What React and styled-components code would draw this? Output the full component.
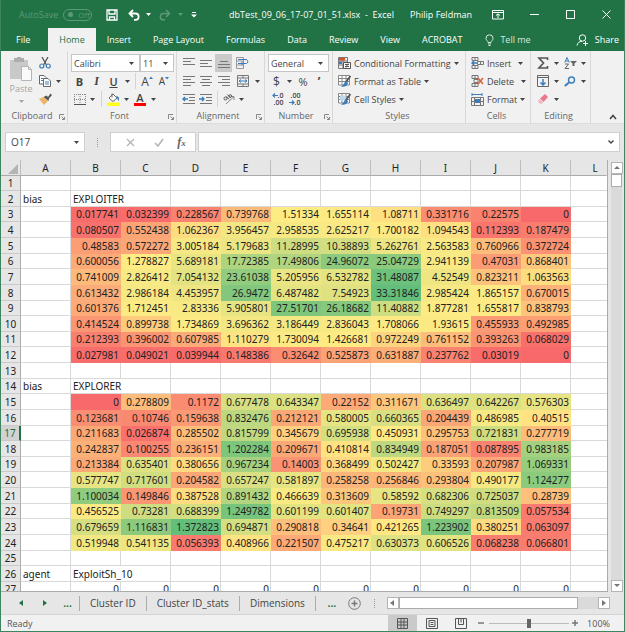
import React, { useState } from "react";
import styled, { createGlobalStyle, css } from "styled-components";

const GREEN = "#217346";
const FADED = "#5a9a78";
const UI = `"Open Sans", "Noto Sans", sans-serif`;

const GlobalStyle = createGlobalStyle`
  *, *::before, *::after { box-sizing: border-box; }
  body { margin: 0; font-family: ${UI}; font-size: 9px; color: #444; }
  button, input, select { font: inherit; color: inherit; margin: 0; padding: 0; border: 0; background: none; border-radius: 0; }
  svg { display: block; flex: none; }
`;

const Window = styled.div`
  display: flex;
  flex-direction: column;
  height: 100vh;
  border: 1px solid #3d8560;
  border-top-color: ${GREEN};
  background: #e6e6e6;
`;

/* ---------- title bar ---------- */

const TitleBar = styled.header`
  display: flex;
  align-items: center;
  height: 27px;
  flex: none;
  padding: 0 0 0 18px;
  background: ${GREEN};
  color: #fff;
`;

const AutoSave = styled.label`
  display: flex;
  align-items: center;
  gap: 5px;
  color: ${FADED};
  width: 82px;
  white-space: nowrap;
`;

const Toggle = styled.button`
  display: flex;
  align-items: center;
  gap: 5px;
  width: 29px;
  height: 12px;
  padding: 0 4px;
  border: 1px solid ${FADED};
  border-radius: 6px;
  font-size: 8px;
  &::before {
    content: "";
    width: 5px;
    height: 5px;
    border-radius: 50%;
    background: ${FADED};
    flex: none;
  }
`;

const BarButton = styled.button`
  display: flex;
  align-items: center;
  justify-content: center;
  flex: none;
  width: ${(p) => p.$w}px;
  height: 24px;
  color: ${(p) => (p.$faded ? FADED : "#fff")};
`;

const DocTitle = styled.h1`
  flex: 1;
  margin: 0;
  padding-left: 8px;
  font-size: 9px;
  font-weight: 400;
  text-align: center;
  white-space: pre;
`;

const UserName = styled.span`
  white-space: nowrap;
  margin-right: 8px;
`;

/* ---------- tabs ---------- */

const TabBar = styled.nav`
  display: flex;
  align-items: stretch;
  height: 23px;
  flex: none;
  padding: 0 4px;
  background: ${GREEN};
  color: #fff;
`;

const Tab = styled.button`
  display: flex;
  align-items: center;
  gap: 6px;
  padding: 0 ${(p) => p.$pad || 11}px;
  white-space: nowrap;
  &:first-child { margin-right: 7px; }
  ${(p) => p.$active && css`
    background: #f1f1f1;
    color: ${GREEN};
  `}
`;

const TellMe = styled(Tab)`
  color: #d6e8dd;
`;

const Share = styled(Tab)`
  margin-left: auto;
`;

/* ---------- ribbon ---------- */

const Ribbon = styled.section`
  display: flex;
  flex: none;
  height: 73px;
  background: #f1f1f1;
  border-bottom: 1px solid #dcdcdc;
`;

const Group = styled.div`
  display: flex;
  flex-direction: column;
  flex: none;
  width: ${(p) => p.$w}px;
  padding: 3px 0 0 ${(p) => p.$pad || 4}px;
  border-right: 1px solid #d8d8d8;
`;

const GroupBody = styled.div`
  display: flex;
  height: 54px;
`;

const Rows = styled.div`
  display: flex;
  flex-direction: column;
`;

const Row = styled.div`
  display: flex;
  align-items: center;
  height: 18px;
`;

const Caption = styled.div`
  display: flex;
  align-items: center;
  justify-content: center;
  height: 15px;
  position: relative;
  color: #666;
  padding-right: 8px;
`;

const Launcher = styled.button`
  position: absolute;
  right: 2px;
  top: 6px;
  color: #888;
`;

const Tool = styled.button`
  display: flex;
  align-items: center;
  justify-content: center;
  flex: none;
  width: ${(p) => p.$w}px;
  height: 18px;
  background: ${(p) => (p.$on ? "#cacaca" : "none")};
`;

const LetterTool = styled(Tool)`
  font-size: ${(p) => p.$size || 11}px;
  font-weight: ${(p) => p.$weight || 400};
  font-style: ${(p) => (p.$italic ? "italic" : "normal")};
  font-family: ${(p) => (p.$italic ? `"Liberation Serif", serif` : UI)};
  text-decoration: ${(p) => (p.$underline ? "underline" : "none")};
`;

const TextTool = styled.button`
  display: flex;
  align-items: center;
  gap: 3px;
  height: 18px;
  white-space: nowrap;
`;

const PasteButton = styled.button`
  display: flex;
  flex-direction: column;
  align-items: center;
  width: 32px;
  padding-top: 3px;
  margin-right: 1px;
  color: #a5a5a5;
  svg + span { margin: 2px 0 5px; line-height: 12px; }
`;

const Rule = styled.i`
  width: 1px;
  height: 16px;
  margin: 0 ${(p) => p.$gap || 4}px;
  background: #d4d4d4;
`;

const SelectBox = styled.label`
  display: flex;
  align-items: center;
  width: ${(p) => p.$w}px;
  height: 18px;
  padding: 0 5px 0 2px;
  border: 1px solid #c6c6c6;
  background: #fff;
  select {
    flex: 1;
    min-width: 0;
    appearance: none;
    outline: 0;
  }
`;

const Collapse = styled.button`
  align-self: flex-end;
  margin: 0 7px 3px auto;
`;

/* ---------- formula bar ---------- */

const FormulaBar = styled.section`
  display: flex;
  align-items: center;
  height: 36px;
  flex: none;
  padding: 0 4px;
`;

const Field = styled.div`
  display: flex;
  align-items: center;
  height: 20px;
  border: 1px solid #cfcfcf;
  background: #fff;
  padding: 0 5px;
  width: ${(p) => (p.$w ? `${p.$w}px` : "auto")};
  flex: ${(p) => (p.$w ? "none" : 1)};
  margin-right: ${(p) => p.$gap || 0}px;
  justify-content: ${(p) => (p.$spread ? "space-around" : "flex-start")};
  input { flex: 1; min-width: 0; outline: 0; font-size: 10px; }
`;

const Fx = styled.button`
  font: italic 700 12px "Liberation Serif", serif;
  color: #666;
  small { font-size: 9px; }
`;

const DotsHandle = styled.i`
  width: 1px;
  height: 9px;
  margin: 0 12px;
  border-left: 1px dotted #999;
`;

/* ---------- sheet ---------- */

const SheetArea = styled.main`
  display: flex;
  flex: 1;
  min-height: 0;
`;

const SheetClip = styled.div`
  flex: 1;
  min-width: 0;
  overflow: hidden;
  border-right: 1px solid #ababab;
  border-bottom: 1px solid #ababab;
`;

const Sheet = styled.table`
  width: 100%;
  table-layout: fixed;
  border-collapse: separate;
  border-spacing: 0;
  background: #fff;
  font-family: "Noto Sans", "Open Sans", sans-serif;
  font-size: 10px;
  line-height: 14px;
  color: #222;
  tbody tr { height: 16px; }
  tbody tr:nth-child(8n + 1), tbody tr:nth-child(8n + 3), tbody tr:nth-child(8n + 6) { height: 15px; }
`;

const Col = styled.col`
  width: ${(p) => (p.$w ? `${p.$w}px` : "auto")};
`;

const ColHead = styled.th`
  height: 16px;
  padding: 0;
  font-weight: 400;
  background: #e6e6e6;
  border-right: 1px solid #bdbdbd;
  border-bottom: 1px solid #ababab;
  &:last-child { border-right-color: #e6e6e6; padding-left: 13px; }
`;

const Corner = styled(ColHead)`
  svg { margin: 0 0 0 auto; }
  padding: 2px 2px 0 0;
`;

const RowHead = styled.th`
  padding: 0;
  font-weight: 400;
  background: ${(p) => (p.$active ? "#d2d2d2" : "#e6e6e6")};
  color: ${(p) => (p.$active ? GREEN : "#222")};
  border-right: ${(p) => (p.$active ? `2px solid ${GREEN}` : "1px solid #ababab")};
  border-bottom: 1px solid #cacaca;
`;

const Cell = styled.td`
  padding: 0 1px 0 2px;
  white-space: nowrap;
  overflow: hidden;
  border-right: 1px solid #d9d9d9;
  border-bottom: 1px solid #d9d9d9;
  text-align: ${(p) => (p.$num ? "right" : "left")};
  &:last-child { border-right: 0; }
`;

const HeatCell = styled(Cell)`
  border-color: transparent;
  background-clip: border-box;
  text-align: right;
`;

const VScroll = styled.div`
  display: flex;
  flex-direction: column;
  width: 16px;
  flex: none;
  padding: 2px 2px 0 3px;
`;

const Track = styled.div`
  flex: 1;
  display: flex;
  flex-direction: ${(p) => (p.$vertical ? "column" : "row")};
  background: #dadada;
`;

const ScrollButton = styled.button`
  display: flex;
  align-items: center;
  justify-content: center;
  flex: none;
  width: 12px;
  height: 12px;
  background: #fff;
  border: 1px solid #b4b4b4;
  color: #777;
`;

const Thumb = styled.div`
  background: #fff;
  border: 1px solid #ababab;
  ${(p) => (p.$vertical ? "height: 13px;" : "width: 90%;")}
`;

/* ---------- bottom ---------- */

const SheetTabs = styled.footer`
  display: flex;
  align-items: center;
  flex: none;
  height: 22px;
  padding: 0 14px 0 9px;
`;

const NavButton = styled.button`
  display: flex;
  justify-content: center;
  align-items: center;
  width: ${(p) => p.$w || 23}px;
  height: 20px;
  flex: none;
  color: ${(p) => (p.$grey ? "#777" : GREEN)};
  font-weight: 700;
  font-size: 10px;
`;

const SheetTab = styled.button`
  height: 15px;
  font-size: 10px;
  line-height: 13px;
  padding: 0 10px;
  white-space: nowrap;
  border-right: 1px solid #ababab;
  &:first-of-type { border-left: 1px solid #ababab; }
`;

const TabList = styled.div`
  display: flex;
`;

const HScroll = styled.div`
  display: flex;
  height: 12px;
  flex: 1;
`;

const StatusBar = styled.div`
  display: flex;
  align-items: center;
  flex: none;
  height: 17px;
  padding: 0 14px 0 6px;
  background: #f1f1f1;
  border-top: 1px solid #d4d4d4;
  color: #555;
`;

const Ready = styled.span`
  flex: 1;
`;

const ViewButton = styled.button`
  display: flex;
  align-items: center;
  justify-content: center;
  width: 29px;
  height: 16px;
  background: ${(p) => (p.$on ? "#cacaca" : "none")};
`;

const ZoomSlider = styled.input`
  appearance: none;
  width: 80px;
  height: 10px;
  margin: 0 2px;
  &::-webkit-slider-runnable-track { height: 1px; background: #bcbcbc; }
  &::-webkit-slider-thumb { appearance: none; width: 4px; height: 9px; margin-top: -4px; background: #666; }
`;

const Zoom = styled.output`
  width: 31px;
  text-align: right;
`;

/* ---------- icons ---------- */

const Svg = ({ w = 12, h = 12, children, ...rest }) => (
  <svg width={w} height={h} viewBox={`0 0 ${w} ${h}`} fill="none" stroke="currentColor" aria-hidden="true" {...rest}>
    {children}
  </svg>
);

const Caret = () => (
  <Svg w={5} h={3} stroke="none"><path d="M0 0h5L2.500 3z" fill="currentColor" /></Svg>
);

const SaveIcon = () => (
  <Svg><path d="M1 1h10v10H1zM3 1v4h6V1M3.500 11V8h5v3" strokeWidth="1.3" /></Svg>
);
const UndoIcon = () => (
  <Svg w={13} h={12}><path d="M5 1L1.500 4.500 5 8M2 4.500h5.500a3 3 0 0 1 0 6.300H6" strokeWidth="1.800" /></Svg>
);
const RedoIcon = () => (
  <Svg w={13} h={12}><path d="M8 1l3.500 3.500L8 8M11 4.500H5.500a3 3 0 0 0 0 6.300H7" strokeWidth="1.500" /></Svg>
);
const CustomizeIcon = () => (
  <Svg w={6} h={6} stroke="none" fill="currentColor"><path d="M1 0h4v1H1zM0 2.500h6L3 5.500z" /></Svg>
);
const RibbonIcon = () => (
  <Svg w={12} h={10}><path d="M.5.500h11v8.500H.5zM.5 2.500h11M6 8V4M4 5.500L6 3.800l2 1.700" /></Svg>
);
const BulbIcon = () => (
  <Svg w={9} h={12}><path d="M3 8.500C3 7 1 6.500 1 4.300a3.500 3.500 0 0 1 7 0C8 6.500 6 7 6 8.500zM3 10h3M3.500 11.500h2" /></Svg>
);
const PersonIcon = () => (
  <Svg w={13} h={12}><circle cx="6.500" cy="4" r="3.200" /><path d="M1 11.500C1.500 8.500 3.500 7.500 6 7.300M7 9.500h5M9.500 7v5" /></Svg>
);
const PasteIcon = () => (
  <Svg w={23} h={24} stroke="none">
    <path d="M0 3h18v19H0z" fill="#c9c9c9" /><path d="M4 1h3V0h4v1h3v4H4z" fill="#adadad" />
    <path d="M11.500 9.500h7l3 3v11h-10z" fill="#fafafa" stroke="#b5b5b5" /><path d="M18.500 9.500v3h3" stroke="#b5b5b5" />
  </Svg>
);
const CutIcon = () => (
  <Svg><path d="M3 0l4.500 8M9 0L4.500 8" stroke="#555" strokeWidth="1.300" /><circle cx="2.800" cy="9" r="2" stroke="#3b7dba" strokeWidth="1.200" /><circle cx="9.200" cy="9" r="2" stroke="#3b7dba" strokeWidth="1.200" /></Svg>
);
const CopyIcon = () => (
  <Svg><path d="M.5.500h4.500l2 2v6.500H.5z" fill="#fff" stroke="#666" /><path d="M4.500 3.500h4.500l2.500 2.500v5.500h-7z" fill="#fff" stroke="#666" /><path d="M2 3.500h2M2 5.500h2M6 7h4M6 9h4" stroke="#3b7dba" /></Svg>
);
const BrushIcon = () => (
  <Svg w={13} h={12} stroke="none"><path d="M0 6l4-2 5 4-4 4z" fill="#edb468" /><path d="M4.500 4l3-1.500L9 4l2.500-3.500L13 2l-3 3.500L9.500 8z" fill="#555" /></Svg>
);
const BordersIcon = () => (
  <Svg w={12} h={11}><path d="M.5 0v10M6 0v10M11.500 0v10M0 .5h12M0 5.500h12" strokeDasharray="1 1" stroke="#888" /><path d="M0 10.500h12" stroke="#555" /></Svg>
);
const FillIcon = () => (
  <Svg w={13} h={13}><path d="M2 5l4-4 4 4-4 3.500z" fill="#fff" stroke="#666" /><path d="M5 .5v4" stroke="#666" /><path d="M10 3c2.500 1 2.500 3 1.500 5-1-1.500-1-3-2.500-4z" fill="#3b7dba" stroke="none" /><path d="M0 9.500h13V13H0z" fill="#ffff1e" stroke="none" /></Svg>
);
const ColourBar = styled.span`
  display: flex;
  flex-direction: column;
  align-items: center;
  width: 12px;
  line-height: 10px;
  border-bottom: 3px solid #f00;
`;
const Mark = ({ down }) => (
  <Svg w={5} h={11} stroke="none"><path d={down ? "M0 1h4L2 3.500z" : "M0 3h4L2 .5z"} fill="#3b7dba" /></Svg>
);
const Lines = ({ widths, start = 0, align = "left" }) => (
  <Svg w={12} h={11}>
    {widths.map((w, i) => {
      const x = align === "left" ? 0 : align === "right" ? 12 - w : (12 - w) / 2;
      return <path key={i} d={`M${x} ${start + i * 3 + 0.5}h${w}`} stroke="#777" />;
    })}
  </Svg>
);
const WrapIcon = () => (
  <Svg w={13} h={12}><path d="M.5.500h7v11h-7zM.5 4h7M.5 8h7" stroke="#999" /><path d="M2 2.500h9M2 6.500h8.500a2 2 0 0 0 .5-3.500M7 4.500L5 6.500l2 2" stroke="#3b7dba" /></Svg>
);
const MergeIcon = () => (
  <Svg><path d="M.5.500h11v11H.5zM.5 3h11M.5 9h11M6 .5V3M6 9v2.500" stroke="#777" /><path d="M2 6h8M4 4.500L2 6l2 1.500M8 4.500L10 6 8 7.500" stroke="#3b7dba" /></Svg>
);
const IndentIcon = ({ flip }) => (
  <Svg w={13} h={10}><path d="M1 .5h12M7 3.500h6M7 6.500h6M1 9.500h12" stroke="#777" /><path d={flip ? "M0 5h5M3 3l2 2-2 2" : "M6 5H1M3 3L1 5l2 2"} stroke="#3b7dba" strokeWidth="1.400" /></Svg>
);
const OrientationIcon = () => (
  <Svg w={13} h={12}><path d="M3 11L11 3.500M11 7V3.500H8" stroke="#888" /><circle cx="2.500" cy="5.500" r="1.500" stroke="#555" /><path d="M3.500 3.500l2.500 3M4.500 1.500l3 3.500" stroke="#555" /><circle cx="7.300" cy="3" r="1.300" stroke="#555" /></Svg>
);
const DecimalBox = styled.span`
  display: flex;
  flex-direction: column;
  align-items: flex-end;
  width: 14px;
  font-size: 7px;
  line-height: 7px;
  font-weight: 600;
  span { display: flex; align-items: center; }
`;
const BlueArrow = ({ right }) => (
  <Svg w={6} h={5}><path d={right ? "M0 2.500h5M3 .5l2 2-2 2" : "M6 2.500H1M3 .5l-2 2 2 2"} stroke="#3b7dba" strokeWidth="1.200" /></Svg>
);
const CondIcon = () => (
  <Svg w={13} h={12}><path d="M.5.500h9v11h-9zM.5 4h9M.5 8h9M5 .5v11" stroke="#777" /><path d="M1 1h6v2.500H1z" fill="#d9502f" stroke="none" /><path d="M1 4.500h3V7H1z" fill="#3b7dba" stroke="none" /><path d="M5.500 5.500h7v6h-7z" fill="#fff" stroke="#555" /><path d="M7 7.500h4M7 9.500h4M10 6.500L8 10.500" stroke="#555" /></Svg>
);
const TableStyleIcon = ({ cell }) => (
  <Svg w={13} h={12}><path d="M.5.500h11v9.500H.5zM.5 3.500h11M.5 6.500h11M4 .5V10M8 .5V10" stroke="#888" fill="#fff" />{cell && <path d="M2 2.500h6v5H2z" fill="#bcd6ec" stroke="none" />}<path d="M12.500 1L8 7" stroke="#555" strokeWidth="1.800" /><path d="M8.500 6C6 6.500 6.500 10 3 11.500c3.500.800 6.500-.5 7-3.500z" fill="#3b7dba" stroke="none" /></Svg>
);
const InsertIcon = () => (
  <Svg w={13} h={12}><path d="M1 .5h6v3H1zM4 .5v3M1 8.500h6v3H1zM4 8.500v3M6.500 4.500h6v3h-6zM9.500 4.500v3" stroke="#777" /><path d="M6 6H1M3 4L1 6l2 2" stroke="#3b7dba" strokeWidth="1.500" /></Svg>
);
const DeleteIcon = () => (
  <Svg w={13} h={12}><path d="M1 .5h6v3H1zM4 .5v3M1 8.500h6v3H1zM4 8.500v3M3 4.500h4v3H3z" stroke="#777" /><path d="M7 3l5 6M12 3L7 9" stroke="#d9603b" strokeWidth="1.500" /></Svg>
);
const FormatIcon = () => (
  <Svg w={13} h={13}><path d="M1 1.500h10M1 0v3M11 0v3" stroke="#3b7dba" /><path d="M.5 4.500h12v8H.5zM.5 8.500h12M3.500 4.500v8M9.500 4.500v8" stroke="#777" /><path d="M4 6h5v4H4z" fill="#3b7dba" stroke="none" /></Svg>
);
const SumIcon = () => (
  <Svg><path d="M10.500 3V1H2l4.500 5L2 11h8.500V9" stroke="#555" strokeWidth="1.700" /></Svg>
);
const SortIcon = () => (
  <Svg w={13} h={12}><path d="M.8 5.500L3 .5l2.200 5M1.500 4h3" stroke="#3b7dba" /><path d="M1 7h3.500L1 11.500h4" stroke="#666" /><path d="M6 4h7l-2.500 2.500V9H8.500V6.500z" fill="#666" stroke="none" /></Svg>
);
const FillDownIcon = () => (
  <Svg><path d="M.5.500h11v11H.5zM.5 2.500h11" stroke="#666" /><path d="M6 4v6M3.500 7.500L6 10l2.500-2.500" stroke="#3b7dba" strokeWidth="1.500" /></Svg>
);
const FindIcon = () => (
  <Svg w={12} h={11}><circle cx="7.500" cy="4" r="3" stroke="#3b7dba" strokeWidth="1.400" /><path d="M5 6.500L.8 10" stroke="#3b7dba" strokeWidth="2" /></Svg>
);
const EraserIcon = () => (
  <Svg w={12} h={10} stroke="none"><path d="M8 0l3 3-4.500 5L3 4.500z" fill="#e8788a" /><path d="M2.500 5L6 8.500 4.500 10 2 9 1 7z" fill="#f3b3bd" /></Svg>
);
const LaunchIcon = () => (
  <Svg w={6} h={6}><path d="M.5 5V.5H5M2.500 2.500l3 3M5.500 3v2.500H3" /></Svg>
);
const Tri = ({ dir }) => {
  const d = { left: "M4 0v6L0 3z", right: "M1 0v6l4-3z", up: "M0 4h6L3 1z", down: "M0 1h6L3 4z" }[dir];
  return <Svg w={6} h={6} stroke="none"><path d={d} fill="currentColor" /></Svg>;
};

/* ---------- data ---------- */

const parse = (text) => text.trim().split("\n").map((line) => line.trim().split(/\s+/));

const exploiter = parse(`
0.017741 0.032399 0.228567 0.739768 1.51334 1.655114 1.08711 0.331716 0.22575 0
0.080507 0.552438 1.062367 3.956457 2.958535 2.625217 1.700182 1.094543 0.112393 0.187479
0.48583 0.572272 3.005184 5.179683 11.28995 10.38893 5.262761 2.563583 0.760966 0.372724
0.600056 1.278827 5.689181 17.72385 17.49806 24.96072 25.04729 2.941139 0.47031 0.868401
0.741009 2.826412 7.054132 23.61038 5.205956 6.532782 31.48087 4.52549 0.823211 1.063563
0.613432 2.986184 4.453957 26.9472 6.487482 7.54923 33.31846 2.985424 1.865157 0.670015
0.601376 1.712451 2.83336 5.905801 27.51701 26.18682 11.40882 1.877281 1.655817 0.838793
0.414524 0.899738 1.734869 3.696362 3.186449 2.836043 1.708066 1.93615 0.455933 0.492985
0.212393 0.396002 0.607985 1.110279 1.730094 1.426681 0.972249 0.761152 0.393263 0.068029
0.027981 0.049021 0.039944 0.148386 0.32642 0.525873 0.631887 0.237762 0.03019 0`);

const explorer = parse(`
0 0.278809 0.1172 0.677478 0.643347 0.22152 0.311671 0.636497 0.642267 0.576303
0.123681 0.10746 0.159638 0.832476 0.212121 0.580005 0.660365 0.204439 0.486985 0.40515
0.211683 0.026874 0.285502 0.815799 0.345679 0.695938 0.450931 0.295753 0.721831 0.277719
0.242837 0.100255 0.236151 1.202284 0.209671 0.410814 0.834949 0.187051 0.087895 0.983185
0.213384 0.635401 0.380656 0.967234 0.14003 0.368499 0.502427 0.33593 0.207987 1.069331
0.577747 0.717601 0.204582 0.657247 0.581897 0.258258 0.256846 0.293804 0.490177 1.124277
1.100034 0.149846 0.387528 0.891432 0.466639 0.313609 0.58592 0.682306 0.725037 0.28739
0.456525 0.73281 0.688399 1.249782 0.601199 0.601407 0.19731 0.749297 0.813509 0.057534
0.679659 1.116831 1.372823 0.694871 0.290818 0.34641 0.421265 1.223902 0.380251 0.063097
0.519948 0.541135 0.056393 0.408966 0.221507 0.475217 0.630373 0.606526 0.068238 0.066801`);

/* Three-colour scale: minimum red, median yellow, maximum green. */
const LOW = [248, 105, 107];
const MID = [255, 235, 132];
const HIGH = [99, 190, 123];

const scaleFor = (block) => {
  const sorted = block.flat().map(Number).sort((a, b) => a - b);
  const half = sorted.length / 2;
  const mid = (sorted[half - 1] + sorted[half]) / 2;
  const min = sorted[0];
  const max = sorted[sorted.length - 1];
  return (v) => {
    const [from, to, t] = v < mid ? [LOW, MID, (v - min) / (mid - min)] : [MID, HIGH, (v - mid) / (max - mid)];
    return `rgb(${from.map((c, i) => Math.round(c + (to[i] - c) * t)).join(",")})`;
  };
};

const heatRows = (block) => {
  const colour = scaleFor(block);
  return block.map((values) => ({ heat: values.map((v) => ({ v, bg: colour(Number(v)) })) }));
};

const sheetRows = [
  {},
  { a: "bias", b: "EXPLOITER" },
  ...heatRows(exploiter),
  {},
  { a: "bias", b: "EXPLORER" },
  ...heatRows(explorer),
  {},
  { a: "agent", b: "ExploitSh_10" },
  { plain: Array(10).fill("0") },
];

const columns = "ABCDEFGHIJKL".split("");

const SheetRow = ({ row, n }) => (
  <tr>
    <RowHead scope="row" $active={n === 17}>{n}</RowHead>
    <Cell>{row.a}</Cell>
    {row.heat && row.heat.map((c, i) => <HeatCell key={i} style={{ backgroundColor: c.bg }}>{c.v}</HeatCell>)}
    {row.plain && row.plain.map((v, i) => <Cell key={i} $num>{v}</Cell>)}
    {row.b && <Cell colSpan={2}>{row.b}</Cell>}
    {!row.heat && !row.plain && Array.from({ length: row.b ? 8 : 10 }, (_, i) => <Cell key={i} />)}
    <Cell />
  </tr>
);

const GroupCaption = ({ children, launcher }) => (
  <Caption>
    {children}
    {launcher && <Launcher aria-label={`${children} settings`}><LaunchIcon /></Launcher>}
  </Caption>
);

const CaretTool = ({ w = 12, label }) => <Tool $w={w} aria-label={label}><Caret /></Tool>;

const Picker = ({ w, label, value }) => (
  <SelectBox $w={w}>
    <select aria-label={label} defaultValue={value}><option>{value}</option></select>
    <Caret />
  </SelectBox>
);

const HomeRibbon = () => (
  <Ribbon>
    <Group $w={67}>
      <GroupBody>
        <PasteButton><PasteIcon /><span>Paste</span><Caret /></PasteButton>
        <Rows>
          <Row><Tool $w={14} aria-label="Cut"><CutIcon /></Tool></Row>
          <Row><Tool $w={14} aria-label="Copy"><CopyIcon /></Tool><CaretTool label="Copy options" /></Row>
          <Row><Tool $w={14} aria-label="Format painter"><BrushIcon /></Tool></Row>
        </Rows>
      </GroupBody>
      <GroupCaption launcher>Clipboard</GroupCaption>
    </Group>

    <Group $w={109} $pad={3}>
      <GroupBody>
        <Rows>
          <Row><Picker w={69} label="Font" value="Calibri" /><Picker w={34} label="Font size" value="11" /></Row>
          <Row>
            <LetterTool $w={17} $weight={700} aria-label="Bold">B</LetterTool>
            <LetterTool $w={17} $weight={700} $italic $size={12} aria-label="Italic">I</LetterTool>
            <LetterTool $w={17} $weight={600} $underline aria-label="Underline">U</LetterTool>
            <CaretTool w={10} label="Underline options" />
            <Rule $gap={3} />
            <LetterTool $w={17} $size={12} aria-label="Grow font">A<Mark /></LetterTool>
            <LetterTool $w={17} $size={10} aria-label="Shrink font">A<Mark down /></LetterTool>
          </Row>
          <Row>
            <Tool $w={17} aria-label="Borders"><BordersIcon /></Tool>
            <CaretTool w={9} label="Border options" />
            <Rule $gap={4} />
            <Tool $w={15} aria-label="Fill colour"><FillIcon /></Tool>
            <CaretTool w={11} label="Fill options" />
            <LetterTool $w={16} $weight={600} aria-label="Font colour"><ColourBar>A</ColourBar></LetterTool>
            <CaretTool w={10} label="Font colour options" />
          </Row>
        </Rows>
      </GroupBody>
      <GroupCaption launcher>Font</GroupCaption>
    </Group>

    <Group $w={88} $pad={3}>
      <GroupBody>
        <Rows>
          <Row>
            <Tool $w={17} aria-label="Top align"><Lines widths={[12, 8, 12]} /></Tool>
            <Tool $w={18} aria-label="Middle align"><Lines widths={[12, 8, 12]} start={2} /></Tool>
            <Tool $w={17} $on aria-label="Bottom align"><Lines widths={[8, 12, 12]} start={3} align="center" /></Tool>
            <Tool $w={21} aria-label="Wrap text"><WrapIcon /></Tool>
          </Row>
          <Row>
            <Tool $w={17} aria-label="Align left"><Lines widths={[12, 8, 12, 8]} /></Tool>
            <Tool $w={18} aria-label="Centre"><Lines widths={[12, 8, 12, 8]} align="center" /></Tool>
            <Tool $w={17} aria-label="Align right"><Lines widths={[12, 8, 12, 8]} align="right" /></Tool>
            <Tool $w={21} aria-label="Merge"><MergeIcon /></Tool>
            <CaretTool w={8} label="Merge options" />
          </Row>
          <Row>
            <Tool $w={17} aria-label="Decrease indent"><IndentIcon /></Tool>
            <Tool $w={17} aria-label="Increase indent"><IndentIcon flip /></Tool>
            <Rule $gap={3} />
            <Tool $w={16} aria-label="Orientation"><OrientationIcon /></Tool>
            <CaretTool w={9} label="Orientation options" />
          </Row>
        </Rows>
      </GroupBody>
      <GroupCaption launcher>Alignment</GroupCaption>
    </Group>

    <Group $w={68} $pad={3}>
      <GroupBody>
        <Rows>
          <Row><Picker w={61} label="Number format" value="General" /></Row>
          <Row>
            <LetterTool $w={17} $size={12} aria-label="Currency">$</LetterTool>
            <CaretTool w={9} label="Currency options" />
            <LetterTool $w={18} aria-label="Percent">%</LetterTool>
            <LetterTool $w={14} $size={12} $weight={700} aria-label="Comma style">’</LetterTool>
          </Row>
          <Row>
            <Tool $w={17} aria-label="Increase decimal"><DecimalBox><span><BlueArrow />.0</span><span>.00</span></DecimalBox></Tool>
            <Tool $w={17} aria-label="Decrease decimal"><DecimalBox><span>.00</span><span><BlueArrow right />.0</span></DecimalBox></Tool>
          </Row>
        </Rows>
      </GroupBody>
      <GroupCaption launcher>Number</GroupCaption>
    </Group>

    <Group $w={133} $pad={5}>
      <GroupBody>
        <Rows>
          <TextTool><CondIcon />Conditional Formatting<Caret /></TextTool>
          <TextTool><TableStyleIcon />Format as Table<Caret /></TextTool>
          <TextTool><TableStyleIcon cell />Cell Styles<Caret /></TextTool>
        </Rows>
      </GroupBody>
      <GroupCaption>Styles</GroupCaption>
    </Group>

    <Group $w={65} $pad={5}>
      <GroupBody>
        <Rows>
          <Row><TextTool><InsertIcon />Insert</TextTool><CaretTool w={18} label="Insert options" /></Row>
          <Row><TextTool><DeleteIcon />Delete</TextTool><CaretTool w={18} label="Delete options" /></Row>
          <Row><TextTool><FormatIcon />Format<Caret /></TextTool></Row>
        </Rows>
      </GroupBody>
      <GroupCaption>Cells</GroupCaption>
    </Group>

    <Group $w={60}>
      <GroupBody>
        <Rows>
          <Row>
            <Tool $w={16} aria-label="Sum"><SumIcon /></Tool><CaretTool w={10} label="Sum options" />
            <Tool $w={18} aria-label="Sort"><SortIcon /></Tool><CaretTool w={8} label="Sort options" />
          </Row>
          <Row>
            <Tool $w={16} aria-label="Fill"><FillDownIcon /></Tool><CaretTool w={10} label="Fill direction" />
            <Tool $w={18} aria-label="Find"><FindIcon /></Tool><CaretTool w={8} label="Find options" />
          </Row>
          <Row><Tool $w={16} aria-label="Clear"><EraserIcon /></Tool><CaretTool w={10} label="Clear options" /></Row>
        </Rows>
      </GroupBody>
      <GroupCaption>Editing</GroupCaption>
    </Group>

    <Collapse aria-label="Collapse ribbon"><Svg w={8} h={6}><path d="M1 5l3-3.500L7 5" strokeWidth="1.500" /></Svg></Collapse>
  </Ribbon>
);

const tabs = ["File", "Home", "Insert", "Page Layout", "Formulas", "Data", "Review", "View", "ACROBAT"];

export default function App() {
  const [zoom, setZoom] = useState(100);
  return (
    <Window>
      <GlobalStyle />
      <TitleBar>
        <AutoSave>AutoSave<Toggle type="button" aria-pressed="false">Off</Toggle></AutoSave>
        <BarButton $w={22} aria-label="Save"><SaveIcon /></BarButton>
        <BarButton $w={22} aria-label="Undo"><UndoIcon /></BarButton>
        <BarButton $w={6} aria-label="Undo history"><Caret /></BarButton>
        <BarButton $w={26} $faded aria-label="Redo"><RedoIcon /></BarButton>
        <BarButton $w={6} $faded aria-label="Redo history"><Caret /></BarButton>
        <BarButton $w={22} aria-label="Customize toolbar"><CustomizeIcon /></BarButton>
        <DocTitle>dbTest_09_06_17-07_01_51.xlsx  -  Excel</DocTitle>
        <UserName>Philip Feldman</UserName>
        <BarButton $w={36} aria-label="Ribbon display"><RibbonIcon /></BarButton>
        <BarButton $w={36} aria-label="Minimize"><Svg w={9} h={9}><path d="M0 4.500h9" /></Svg></BarButton>
        <BarButton $w={36} aria-label="Maximize"><Svg w={9} h={9}><path d="M.5.500h8v8h-8z" /></Svg></BarButton>
        <BarButton $w={36} aria-label="Close"><Svg w={9} h={9}><path d="M.5.500l8 8M8.500.500l-8 8" /></Svg></BarButton>
      </TitleBar>
      <TabBar>
        {tabs.map((t) => <Tab key={t} $active={t === "Home"}>{t}</Tab>)}
        <TellMe $pad={12}><BulbIcon />Tell me</TellMe>
        <Share $pad={1}><PersonIcon />Share</Share>
      </TabBar>
      <HomeRibbon />
      <FormulaBar>
        <Field $w={80}><input aria-label="Name box" defaultValue="O17" /><Caret /></Field>
        <DotsHandle />
        <Field $w={86} $gap={2} $spread>
          <BarButton $w={20} aria-label="Cancel"><Svg w={9} h={9} stroke="#b5b5b5"><path d="M1 1l7 7M8 1L1 8" strokeWidth="1.400" /></Svg></BarButton>
          <BarButton $w={20} aria-label="Enter"><Svg w={10} h={9} stroke="#b5b5b5"><path d="M1 5l3 3 5-7" strokeWidth="1.600" /></Svg></BarButton>
          <Fx>f<small>x</small></Fx>
        </Field>
        <Field>
          <input aria-label="Formula" />
          <button aria-label="Expand formula bar"><Svg w={6} h={4}><path d="M.5.500L3 3 5.500.500" strokeWidth="1.400" /></Svg></button>
        </Field>
      </FormulaBar>
      <SheetArea>
        <SheetClip>
          <Sheet>
            <colgroup>
              <Col $w={20} />
              {columns.map((c) => <Col key={c} $w={c === "L" ? 0 : 50} />)}
            </colgroup>
            <thead>
              <tr>
                <Corner aria-label="Select all"><Svg w={10} h={10} stroke="none"><path d="M10 0v10H0z" fill="#b4b4b4" /></Svg></Corner>
                {columns.map((c) => <ColHead key={c} scope="col">{c}</ColHead>)}
              </tr>
            </thead>
            <tbody>{sheetRows.map((r, i) => <SheetRow key={i} row={r} n={i + 1} />)}</tbody>
          </Sheet>
        </SheetClip>
        <VScroll>
          <ScrollButton aria-label="Scroll up"><Tri dir="up" /></ScrollButton>
          <Track $vertical><Thumb $vertical /></Track>
          <ScrollButton aria-label="Scroll down"><Tri dir="down" /></ScrollButton>
        </VScroll>
      </SheetArea>
      <SheetTabs>
        <NavButton aria-label="Previous sheet"><Tri dir="left" /></NavButton>
        <NavButton aria-label="Next sheet"><Tri dir="right" /></NavButton>
        <NavButton aria-label="More sheets before">...</NavButton>
        <TabList>
          <SheetTab>Cluster ID</SheetTab>
          <SheetTab>Cluster ID_stats</SheetTab>
          <SheetTab>Dimensions</SheetTab>
        </TabList>
        <NavButton $w={32} aria-label="More sheets after">...</NavButton>
        <NavButton $w={14} $grey aria-label="New sheet"><Svg w={13} h={13}><circle cx="6.500" cy="6.500" r="5.800" /><path d="M3.500 6.500h6M6.500 3.500v6" strokeWidth="1.500" /></Svg></NavButton>
        <DotsHandle />
        <HScroll>
          <ScrollButton aria-label="Scroll left"><Tri dir="left" /></ScrollButton>
          <Track><Thumb /></Track>
          <ScrollButton aria-label="Scroll right"><Tri dir="right" /></ScrollButton>
        </HScroll>
      </SheetTabs>
      <StatusBar>
        <Ready>Ready</Ready>
        <ViewButton $on aria-label="Normal view"><Svg w={11} h={11}><path d="M.5.500h10v10H.5zM.5 4h10M.5 7h10M4 .5v10M7 .5v10" /></Svg></ViewButton>
        <ViewButton aria-label="Page layout view"><Svg w={12} h={11}><path d="M.5.500h11v10H.5zM3 2.500h6v6H3zM4.500 4.500h3M4.500 6.500h3" /></Svg></ViewButton>
        <ViewButton aria-label="Page break view"><Svg w={12} h={11}><path d="M.5.500h11v10H.5zM3.500.500v6h5v-6M6 .5v4" /></Svg></ViewButton>
        <NavButton $w={12} $grey aria-label="Zoom out"><Svg w={6} h={6}><path d="M0 3h6" strokeWidth="1.500" /></Svg></NavButton>
        <ZoomSlider type="range" min="0" max="200" aria-label="Zoom" value={zoom} onChange={(e) => setZoom(Number(e.target.value))} />
        <NavButton $w={8} $grey aria-label="Zoom in"><Svg w={6} h={6}><path d="M0 3h6M3 0v6" strokeWidth="1.500" /></Svg></NavButton>
        <Zoom>{zoom}%</Zoom>
      </StatusBar>
    </Window>
  );
}
